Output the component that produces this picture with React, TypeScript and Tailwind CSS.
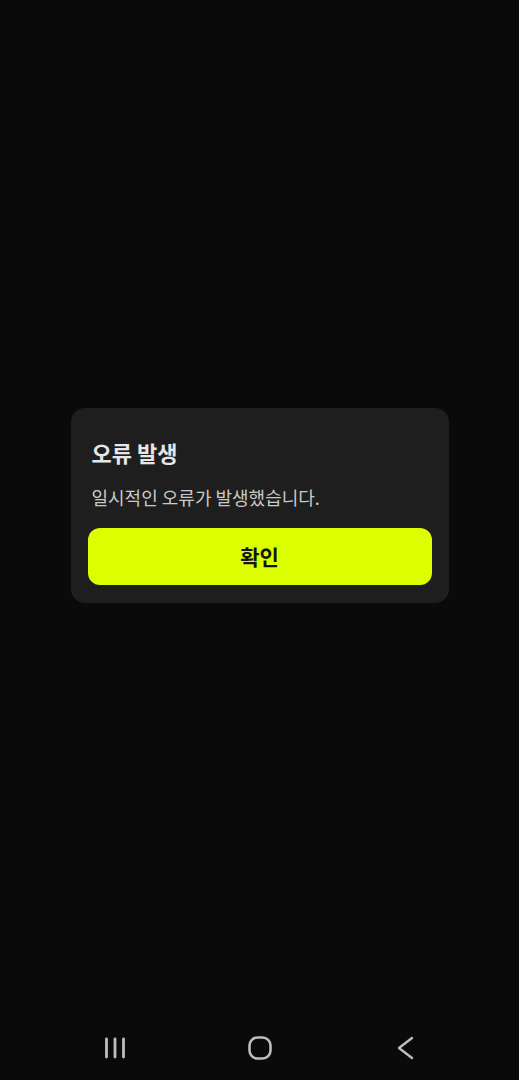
import React from "react"

function NavBar() {
  return (
    <div className="h-16 flex items-center justify-center gap-[120px] text-[#bdbdbd]">
      <svg width="24" height="24" viewBox="0 0 24 24" fill="none" stroke="currentColor" strokeWidth="2.8" strokeLinecap="round">
        <path d="M3.5 3v18M12 3v18M20.5 3v18" />
      </svg>
      <svg width="26" height="26" viewBox="0 0 26 26" fill="none" stroke="currentColor" strokeWidth="2.6">
        <rect x="2.5" y="2.5" width="21" height="21" rx="8" />
      </svg>
      <svg width="24" height="24" viewBox="0 0 24 24" fill="none" stroke="currentColor" strokeWidth="2.4" strokeLinecap="round" strokeLinejoin="round">
        <path d="M19 2L6 12l13 10" />
      </svg>
    </div>
  )
}

export default function App() {
  return (
    <div
      className="w-[519px] h-[1080px] bg-[#0a0a0a] flex flex-col"
      style={{ fontFamily: '"Noto Sans CJK KR", "Noto Sans", sans-serif' }}
    >
      <div className="flex-1 flex items-center justify-center pb-[5px]">
        <div className="w-[378px] bg-[#1e1e1e] rounded-[14px] px-[17px] pt-[30px] pb-[18px]">
          <h2 className="px-[4px] text-[22px] leading-[28px] font-bold text-[#e6e6e6]">오류 발생</h2>
          <p className="mt-[19px] px-[4px] text-[18px] leading-[24px] text-[#c9c9c9]">
            일시적인 오류가 발생했습니다.
          </p>
          <button className="mt-[19px] w-full h-[57px] rounded-[12px] bg-[#dcff00] text-[21px] font-bold text-[#141414]">
            확인
          </button>
        </div>
      </div>
      <NavBar />
    </div>
  )
}
